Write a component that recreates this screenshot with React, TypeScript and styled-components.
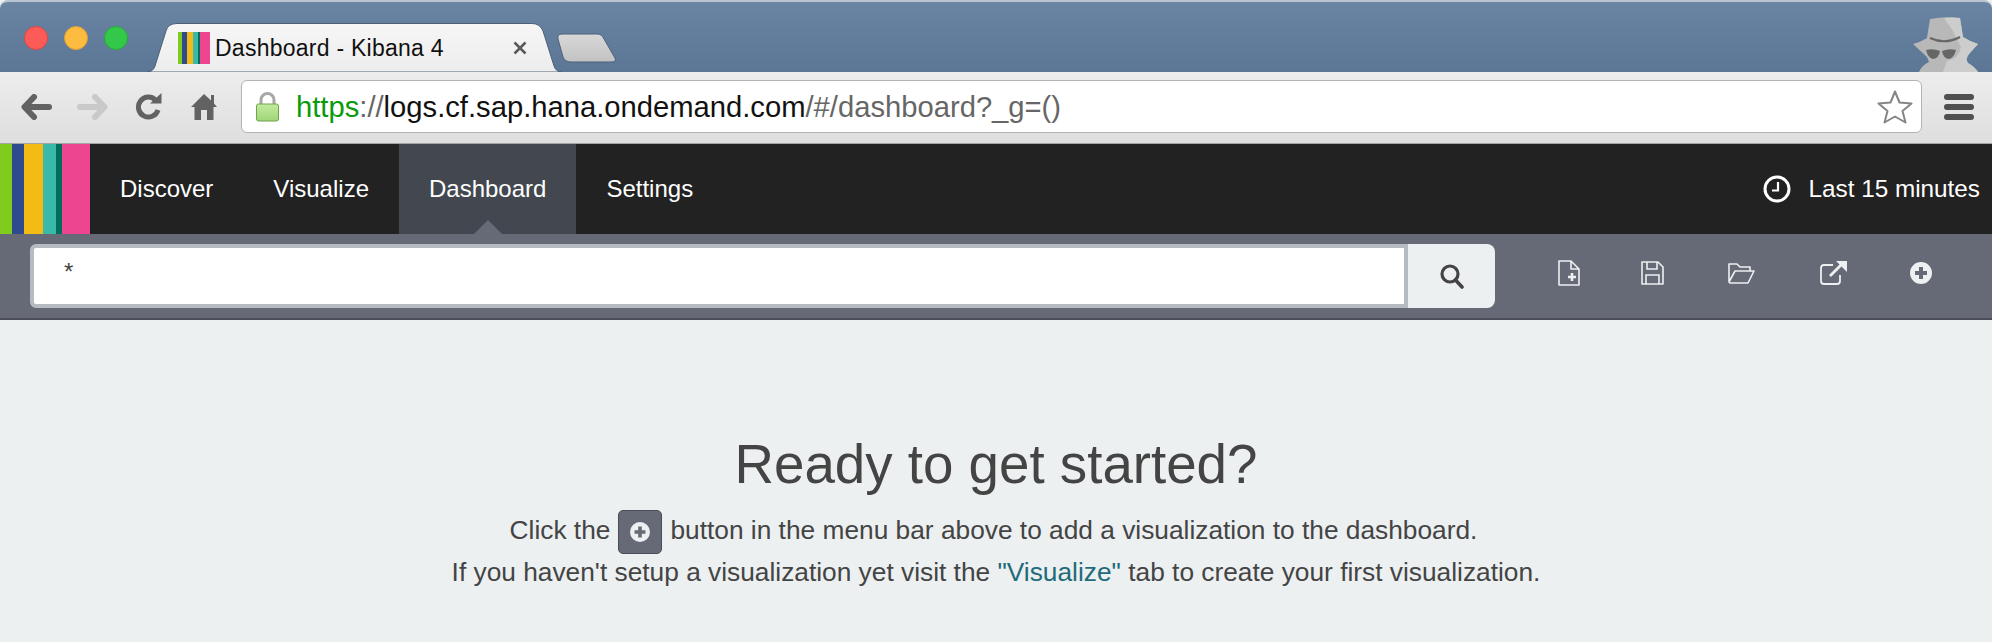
import React from 'react'
import styled, { createGlobalStyle } from 'styled-components'

const GlobalStyle = createGlobalStyle`
  html, body {
    margin: 0;
    padding: 0;
    background: #ecf0f1;
    font-family: "Liberation Sans", Arial, sans-serif;
  }
  * { box-sizing: border-box; }
`

const Page = styled.div`
  width: 1992px;
  height: 642px;
  overflow: hidden;
  display: flex;
  flex-direction: column;
`

const TitleBar = styled.div`
  height: 72px;
  flex: none;
  display: flex;
  align-items: flex-start;
  background: linear-gradient(#6a84a3, #5b7795);
  border-top: 2px solid #b9c4d0;
  border-radius: 8px 8px 0 0;
  padding-top: 24px;
`

const Lights = styled.div`
  display: flex;
  gap: 16px;
  margin-left: 24px;
`

const Light = styled.span<{ $color: string; $edge: string }>`
  width: 24px;
  height: 24px;
  border-radius: 50%;
  background: ${(p) => p.$color};
  border: 1px solid ${(p) => p.$edge};
`

const Tab = styled.div`
  position: relative;
  width: 415px;
  height: 49px;
  margin: -3px 0 0 19px;
  padding: 9px 35px 0 31px;
  display: flex;
  align-items: flex-start;
  flex: none;
  z-index: 1;
`

const TabShape = styled.svg`
  position: absolute;
  left: 0;
  top: 0;
  z-index: -1;
`

const TabTitle = styled.span`
  margin-left: 5px;
  font-size: 23px;
  letter-spacing: 0.25px;
  line-height: 32px;
  color: #111;
  white-space: nowrap;
`

const TabClose = styled.svg`
  margin: 9px 0 0 auto;
`

const NewTab = styled.svg`
  margin: 7px 0 0 -7px;
  flex: none;
`

const Spy = styled.svg`
  margin: -9px 14px 0 auto;
  flex: none;
`

const Toolbar = styled.div`
  height: 72px;
  flex: none;
  display: flex;
  align-items: flex-start;
  padding: 8px 0 0 8px;
  background: linear-gradient(#ededed, #dedede);
  border-bottom: 1px solid #a5a5a5;
`

const ToolSlot = styled.div`
  width: 56px;
  height: 53px;
  display: flex;
  align-items: center;
  justify-content: center;
  flex: none;
`

const Omnibox = styled.div`
  width: 1681px;
  height: 53px;
  margin-left: 9px;
  padding-left: 14px;
  display: flex;
  align-items: center;
  flex: none;
  background: #fff;
  border: 1px solid #b3b3b3;
  border-radius: 6px;
`

const UrlText = styled.span`
  margin-left: 17px;
  padding-top: 2px;
  font-size: 29.2px;
  white-space: nowrap;
  color: #111;
`

const UrlScheme = styled.span`
  color: #0a9a0a;
`

const UrlMuted = styled.span`
  color: #666;
`

const Star = styled.svg`
  margin: 0 8px 0 auto;
`

const MenuIcon = styled.div`
  margin-left: 22px;
  width: 30px;
  height: 53px;
  display: flex;
  flex-direction: column;
  justify-content: center;
  gap: 4px;
`

const MenuBar = styled.span`
  height: 6px;
  border-radius: 3px;
  background: #505050;
`

const NavBar = styled.nav`
  height: 90px;
  flex: none;
  display: flex;
  align-items: stretch;
  background: #222;
`

const Stripes = styled.div<{ $width: number; $height: number }>`
  width: ${(p) => p.$width}px;
  height: ${(p) => p.$height}px;
  display: flex;
  flex: none;
`

const Stripe = styled.span<{ $grow: number; $color: string }>`
  flex: ${(p) => p.$grow} 0 0;
  background: ${(p) => p.$color};
`

const NavItem = styled.a<{ $active?: boolean }>`
  position: relative;
  display: flex;
  align-items: center;
  padding: 0 30px;
  font-size: 24px;
  color: #fff;
  background: ${(p) => (p.$active ? '#43474f' : 'transparent')};
  ${(p) =>
    p.$active &&
    `&::after {
      content: '';
      position: absolute;
      left: 50%;
      bottom: 0;
      margin-left: -14px;
      border-left: 14px solid transparent;
      border-right: 14px solid transparent;
      border-bottom: 14px solid #666a76;
    }`}
`

const TimePicker = styled.div`
  margin-left: auto;
  padding-right: 12px;
  display: flex;
  align-items: center;
  gap: 17px;
  font-size: 24.3px;
  color: #fff;
`

const SubBar = styled.div`
  height: 86px;
  flex: none;
  display: flex;
  align-items: flex-start;
  padding: 10px 0 0 30px;
  background: #666a76;
  border-bottom: 2px solid #4b4e59;
`

const SearchForm = styled.form`
  width: 1465px;
  height: 64px;
  display: flex;
  flex: none;
`

const SearchInput = styled.input`
  flex: 1;
  min-width: 0;
  height: 64px;
  padding: 0 0 8px 30px;
  border: 4px solid #b4bcc2;
  border-radius: 6px 0 0 6px;
  background: #fff;
  font-family: inherit;
  font-size: 24px;
  color: #444;
  outline: none;
`

const SearchButton = styled.button`
  width: 87px;
  height: 64px;
  border: 0;
  padding: 0;
  display: flex;
  align-items: center;
  justify-content: center;
  background: #ecf0f1;
  border-radius: 0 8px 8px 0;
`

const MenuButton = styled.div<{ $gap: number }>`
  margin-left: ${(p) => p.$gap}px;
  height: 58px;
  display: flex;
  align-items: center;
  flex: none;
  color: #ecf0f1;
`

const Empty = styled.main`
  flex: 1;
  padding-top: 114px;
  text-align: center;
  color: #444;
  background: #ecf0f1;
`

const Heading = styled.h1`
  margin: 0 0 15px;
  font-size: 54.7px;
  line-height: 60px;
  font-weight: 400;
`

const Line = styled.p<{ $inset?: number }>`
  margin: 0;
  height: 42px;
  line-height: 42px;
  font-size: 26.3px;
  white-space: nowrap;
  padding-right: ${(p) => p.$inset ?? 0}px;
`

const InlineButton = styled.span`
  display: inline-flex;
  align-items: center;
  justify-content: center;
  width: 44px;
  height: 44px;
  margin: 0 8px;
  vertical-align: middle;
  background: #666a76;
  border: 1px solid #4b4e59;
  border-radius: 5px;
  color: #ecf0f1;
`

const TextLink = styled.a`
  color: #1f6b7a;
`

const stripeSet = [
  { grow: 12, color: '#80cc1c' },
  { grow: 12, color: '#2f4a8f' },
  { grow: 19, color: '#f4bb17' },
  { grow: 13, color: '#39b9a8' },
  { grow: 6, color: '#006e5b' },
  { grow: 28, color: '#ee4590' },
]

function KibanaStripes({ width, height }: { width: number; height: number }) {
  return (
    <Stripes $width={width} $height={height}>
      {stripeSet.map((s) => (
        <Stripe key={s.color} $grow={s.grow} $color={s.color} />
      ))}
    </Stripes>
  )
}

function PlusCircle({ size }: { size: number }) {
  return (
    <svg width={size} height={size} viewBox="0 0 22 22">
      <path
        fill="currentColor"
        fillRule="evenodd"
        d="M11 0a11 11 0 1 0 0 22a11 11 0 1 0 0-22zM9 5h4v4h4v4h-4v4H9v-4H5V9h4z"
      />
    </svg>
  )
}

export default function App() {
  return (
    <Page>
      <GlobalStyle />
      <TitleBar>
        <Lights>
          <Light $color="#fc5b57" $edge="#df4744" />
          <Light $color="#fdbc40" $edge="#de9f34" />
          <Light $color="#34c84a" $edge="#27aa35" />
        </Lights>
        <Tab>
          <TabShape width="415" height="49" viewBox="0 0 415 49">
            <defs>
              <linearGradient id="tabFill" x1="0" y1="0" x2="0" y2="1">
                <stop offset="0" stopColor="#f6f6f6" />
                <stop offset="1" stopColor="#ededed" />
              </linearGradient>
            </defs>
            <path
              d="M0 49Q6 49 8 43L19 8Q21 .5 30 .5L385 .5Q393 .5 396 8L407 43Q409 49 415 49Z"
              fill="url(#tabFill)"
              stroke="#4d6078"
              strokeWidth="1"
            />
          </TabShape>
          <KibanaStripes width={32} height={32} />
          <TabTitle>Dashboard - Kibana 4</TabTitle>
          <TabClose width="14" height="14" viewBox="0 0 14 14">
            <path d="M1.5 1.5l11 11M12.5 1.5l-11 11" stroke="#5a5a5a" strokeWidth="2.6" />
          </TabClose>
        </Tab>
        <NewTab width="62" height="30" viewBox="0 0 62 30">
          <defs>
            <linearGradient id="newTabFill" x1="0" y1="0" x2="0" y2="1">
              <stop offset="0" stopColor="#d8d8d8" />
              <stop offset="1" stopColor="#c2c2c2" />
            </linearGradient>
          </defs>
          <path
            d="M3 6Q2 1 7 1L42 1Q47 1 49 6L60 25Q62 29 56 29L16 29Q10 29 8 24Z"
            fill="url(#newTabFill)"
            stroke="#4d6078"
          />
        </NewTab>
        <Spy width="65" height="55" viewBox="0 0 65 55">
          <path d="M17 2Q32 -1 47 1L50 20Q56 24 65 27L56 37Q52 42 55 46Q62 50 65 55H6Q9 48 16 45L14 40L0 27Q8 25 14 21Z" fill="#b8b8b8" />
          <path d="M31 1Q40 0 47 1L50 20Q56 24 65 27L56 37Q52 42 55 46Q62 50 65 55H30L34 44Q46 42 48 30L40 14Z" fill="#cdcdcd" />
          <path d="M17 21Q32 28 47 20" fill="none" stroke="#666" strokeWidth="2.2" />
          <path d="M13 33Q20 31 27 34Q26 41 20 42Q15 41 13 33ZM29 34Q36 31 43 33Q41 41 36 42Q30 41 29 34Z" fill="#666" />
        </Spy>
      </TitleBar>
      <Toolbar>
        <ToolSlot>
          <svg width="31" height="26" viewBox="0 0 31 26">
            <path d="M13 3L3.5 13L13 23M4 13H28" fill="none" stroke="#626262" strokeWidth="6" strokeLinecap="round" strokeLinejoin="round" />
          </svg>
        </ToolSlot>
        <ToolSlot>
          <svg width="31" height="26" viewBox="0 0 31 26">
            <path d="M18 3L27.5 13L18 23M27 13H3" fill="none" stroke="#c9c9c9" strokeWidth="6" strokeLinecap="round" strokeLinejoin="round" />
          </svg>
        </ToolSlot>
        <ToolSlot>
          <svg width="27" height="27" viewBox="0 0 27 27">
            <path d="M21 7.5A10 10 0 1 0 23 17" fill="none" stroke="#626262" strokeWidth="5" />
            <path d="M15 10.5L26.500 10.500L26.500 0Z" fill="#626262" />
          </svg>
        </ToolSlot>
        <ToolSlot>
          <svg width="26" height="27" viewBox="0 0 26 27">
            <path d="M13 1L20 7.500V2H23V10.500L26 14H22.500V27H16V17H10V27H3.500V14H0Z" fill="#626262" />
          </svg>
        </ToolSlot>
        <Omnibox>
          <svg width="23" height="30" viewBox="0 0 23 30">
            <defs>
              <linearGradient id="lockFill" x1="0" y1="0" x2="0" y2="1">
                <stop offset="0" stopColor="#c4ea9f" />
                <stop offset="1" stopColor="#9ed677" />
              </linearGradient>
            </defs>
            <path d="M5 13V8a6.500 6.500 0 0 1 13 0v5" fill="none" stroke="#a8a8a8" strokeWidth="3" />
            <rect x=".5" y="12" width="22" height="17" rx="2" fill="url(#lockFill)" stroke="#6ea54c" />
          </svg>
          <UrlText>
            <UrlScheme>https</UrlScheme>
            <UrlMuted>://</UrlMuted>
            logs.cf.sap.hana.ondemand.com
            <UrlMuted>/#/dashboard?_g=()</UrlMuted>
          </UrlText>
          <Star width="36" height="34" viewBox="0 0 36 34">
            <path
              d="M18 1.500L22.500 12.500L34.500 13.500L25.500 21L28.500 32.500L18 26.500L7.500 32.500L10.500 21L1.500 13.500L13.500 12.500Z"
              fill="#fff"
              stroke="#858585"
              strokeWidth="2"
              strokeLinejoin="round"
            />
          </Star>
        </Omnibox>
        <MenuIcon>
          <MenuBar />
          <MenuBar />
          <MenuBar />
        </MenuIcon>
      </Toolbar>
      <NavBar>
        <KibanaStripes width={90} height={90} />
        <NavItem>Discover</NavItem>
        <NavItem>Visualize</NavItem>
        <NavItem $active>Dashboard</NavItem>
        <NavItem>Settings</NavItem>
        <TimePicker>
          <svg width="28" height="28" viewBox="0 0 28 28">
            <circle cx="14" cy="14" r="12" fill="none" stroke="#fff" strokeWidth="3" />
            <path d="M15 7V15.500H9" fill="none" stroke="#fff" strokeWidth="2.200" />
          </svg>
          Last 15 minutes
        </TimePicker>
      </NavBar>
      <SubBar>
        <SearchForm>
          <SearchInput readOnly value="*" />
          <SearchButton type="button">
            <svg width="24" height="25" viewBox="0 0 24 25">
              <circle cx="10" cy="10" r="8" fill="none" stroke="#444" strokeWidth="3.200" />
              <path d="M15.500 16L22 23" stroke="#444" strokeWidth="3.600" strokeLinecap="round" />
            </svg>
          </SearchButton>
        </SearchForm>
        <MenuButton $gap={63}>
          <svg width="22" height="26" viewBox="0 0 22 26">
            <path d="M1 1H13L21 9V25H1ZM13 1V9H21" fill="none" stroke="currentColor" strokeWidth="1.600" strokeLinejoin="round" />
            <path d="M14 13V21M10 17H18" stroke="currentColor" strokeWidth="2.600" />
          </svg>
        </MenuButton>
        <MenuButton $gap={61}>
          <svg width="23" height="24" viewBox="0 0 23 24">
            <path d="M1 1H17L22 6V23H1Z" fill="none" stroke="currentColor" strokeWidth="1.600" strokeLinejoin="round" />
            <path d="M6 1V8H16V1M5 23V14H18V23" fill="none" stroke="currentColor" strokeWidth="1.600" />
          </svg>
        </MenuButton>
        <MenuButton $gap={64}>
          <svg width="27" height="22" viewBox="0 0 27 22">
            <path d="M1 20V2H9L12 5H22V9M1 20L7 9H26L20 21H2Z" fill="none" stroke="currentColor" strokeWidth="1.600" strokeLinejoin="round" />
          </svg>
        </MenuButton>
        <MenuButton $gap={65}>
          <svg width="27" height="24" viewBox="0 0 27 24">
            <path d="M13 4H4Q1 4 1 7V20Q1 23 4 23H17Q20 23 20 20V14" fill="none" stroke="currentColor" strokeWidth="1.800" />
            <path d="M10 15L21 4" stroke="currentColor" strokeWidth="2.800" />
            <path d="M16 0H27V11Z" fill="currentColor" />
          </svg>
        </MenuButton>
        <MenuButton $gap={63}>
          <PlusCircle size={22} />
        </MenuButton>
      </SubBar>
      <Empty>
        <Heading>Ready to get started?</Heading>
        <Line $inset={5}>
          Click the
          <InlineButton>
            <PlusCircle size={20} />
          </InlineButton>
          button in the menu bar above to add a visualization to the dashboard.
        </Line>
        <Line>
          If you haven't setup a visualization yet visit the <TextLink>"Visualize"</TextLink> tab to create your first
          visualization.
        </Line>
      </Empty>
    </Page>
  )
}
